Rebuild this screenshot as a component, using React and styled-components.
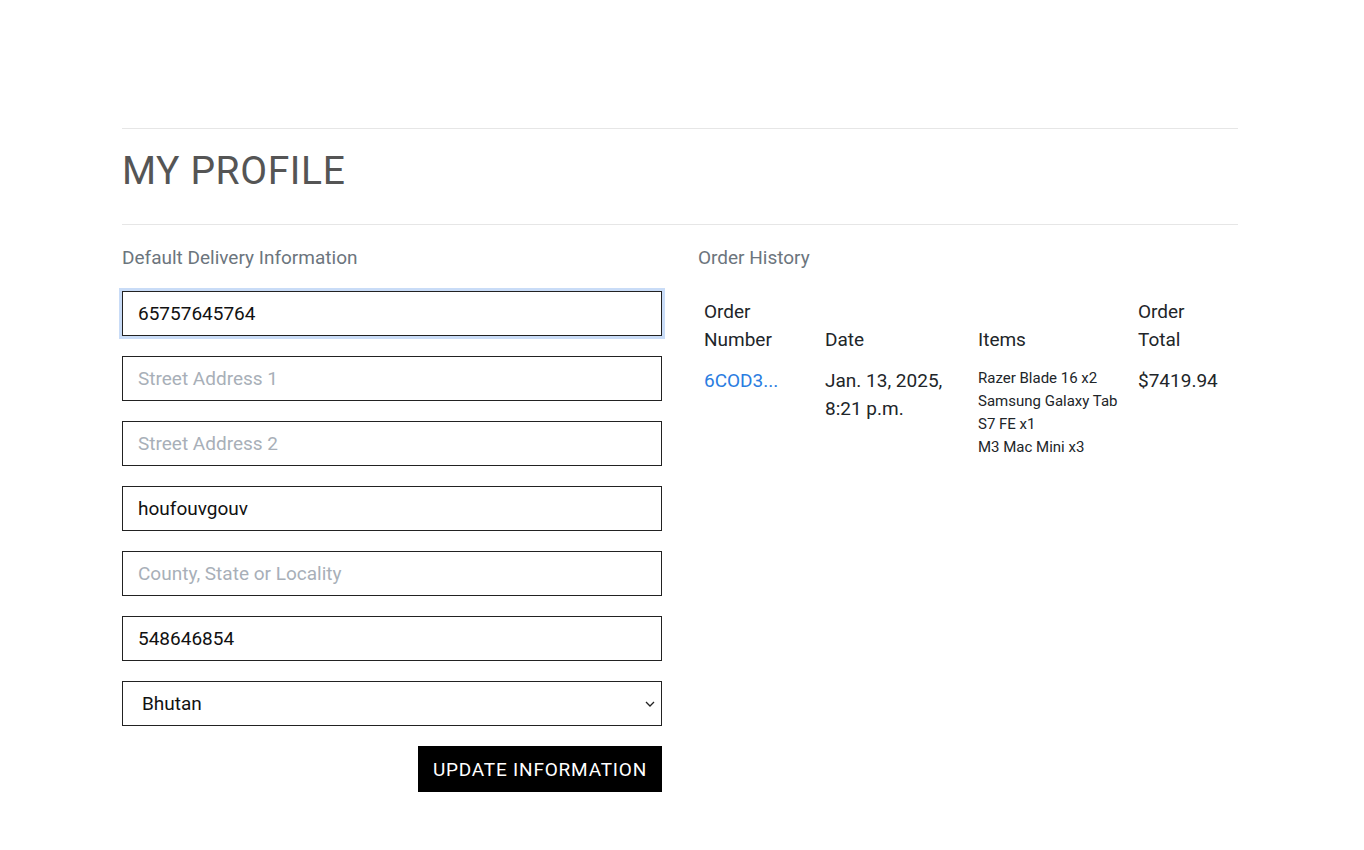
import React from "react";
import styled, { createGlobalStyle } from "styled-components";

const Global = createGlobalStyle`
  html, body { margin: 0; padding: 0; background: #fff; }
  body { font-family: Roboto, "Liberation Sans", sans-serif; color: #212529; }
  * { box-sizing: border-box; }
`;

const Page = styled.main`
  width: 1120px;
  margin: 0 auto;
  padding: 128px 4px 40px 0;
`;

const Rule = styled.hr`
  border: 0;
  border-top: 1px solid #e6e6e6;
  margin: 0;
`;

const Title = styled.h1`
  font-size: 39px;
  font-weight: 400;
  color: #555;
  margin: 0;
  padding: 19px 0 30px;
  line-height: 46px;
  letter-spacing: 0.6px;
`;

const Columns = styled.div`
  display: grid;
  grid-template-columns: 540px 540px;
  column-gap: 36px;
  padding-top: 19px;
`;

const SectionLabel = styled.h2`
  font-size: 19px;
  font-weight: 400;
  color: #6c757d;
  margin: 0 0 19px;
  line-height: 28px;
`;

const Form = styled.form`
  display: flex;
  flex-direction: column;
  gap: 20px;
`;

const Field = styled.input`
  height: 45px;
  width: 100%;
  border: 1px solid #222;
  border-radius: 0;
  padding: 0 15px;
  font-family: inherit;
  font-size: 19px;
  color: #111;
  background: #fff;
  outline: none;
  box-shadow: ${p => (p.$focused ? "0 0 0 3px #c9dcf7" : "none")};
  &::placeholder { color: #a8afb8; }
`;

const SelectBox = styled.select`
  height: 45px;
  width: 100%;
  border: 1px solid #222;
  border-radius: 0;
  padding: 0 16px 0 19px;
  font-family: inherit;
  font-size: 19px;
  color: #111;
  background: #fff;
  appearance: none;
  background-image: url("data:image/svg+xml,%3Csvg xmlns='http://www.w3.org/2000/svg' width='10' height='6' viewBox='0 0 10 6'%3E%3Cpath d='M1 1l4 4 4-4' fill='none' stroke='%23222' stroke-width='1.3'/%3E%3C/svg%3E");
  background-repeat: no-repeat;
  background-position: right 6px center;
`;

const ButtonRow = styled.div`
  display: flex;
  justify-content: flex-end;
`;

const Submit = styled.button`
  height: 46px;
  padding: 0 15px;
  background: #000;
  color: #fff;
  border: 0;
  border-radius: 0;
  font-family: inherit;
  font-size: 19px;
  text-transform: uppercase;
  letter-spacing: 0.8px;
`;

const Table = styled.table`
  border-collapse: collapse;
  width: 100%;
  margin-top: 26px;
`;

const Th = styled.th`
  text-align: left;
  vertical-align: bottom;
  font-weight: 400;
  font-size: 19px;
  line-height: 28px;
  padding: 0 6px 7px;
  color: #212529;
  width: ${p => p.$w};
`;

const Td = styled.td`
  vertical-align: top;
  padding: 6px 6px;
  font-size: ${p => (p.$small ? "15px" : "19px")};
  line-height: ${p => (p.$small ? "23px" : "28px")};
  color: #212529;
`;

const OrderLink = styled.a`
  color: #2a7de1;
  text-decoration: none;
`;

export default function App() {
  return (
    <>
      <Global />
      <Page>
        <Rule />
        <Title>MY PROFILE</Title>
        <Rule />
        <Columns>
          <section>
            <SectionLabel>Default Delivery Information</SectionLabel>
            <Form onSubmit={e => e.preventDefault()}>
              <Field $focused defaultValue="65757645764" placeholder="Phone Number" />
              <Field placeholder="Street Address 1" />
              <Field placeholder="Street Address 2" />
              <Field defaultValue="houfouvgouv" placeholder="Town or City" />
              <Field placeholder="County, State or Locality" />
              <Field defaultValue="548646854" placeholder="Postal Code" />
              <SelectBox defaultValue="BT">
                <option value="BT">Bhutan</option>
              </SelectBox>
              <ButtonRow>
                <Submit type="submit">Update Information</Submit>
              </ButtonRow>
            </Form>
          </section>
          <section>
            <SectionLabel>Order History</SectionLabel>
            <Table>
              <thead>
                <tr>
                  <Th $w="121px">Order<br />Number</Th>
                  <Th $w="153px">Date</Th>
                  <Th $w="160px">Items</Th>
                  <Th>Order<br />Total</Th>
                </tr>
              </thead>
              <tbody>
                <tr>
                  <Td><OrderLink href="#">6COD3...</OrderLink></Td>
                  <Td>Jan. 13, 2025,<br />8:21 p.m.</Td>
                  <Td $small>Razer Blade 16 x2<br />Samsung Galaxy Tab S7 FE x1<br />M3 Mac Mini x3</Td>
                  <Td>$7419.94</Td>
                </tr>
              </tbody>
            </Table>
          </section>
        </Columns>
      </Page>
    </>
  );
}
